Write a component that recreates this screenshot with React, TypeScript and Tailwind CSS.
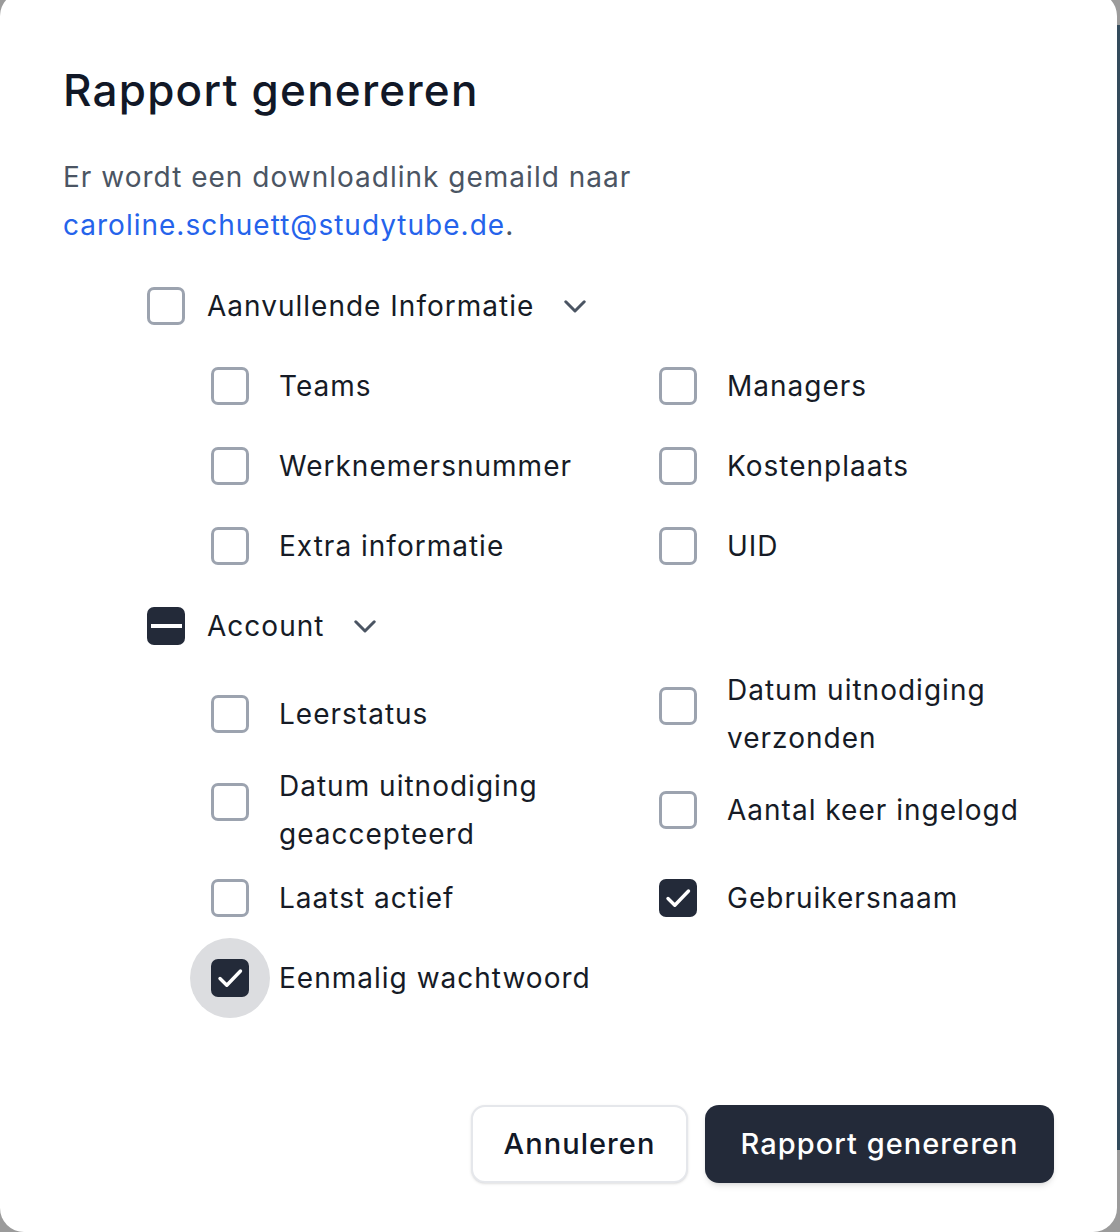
import { useState } from "react";

type Option = {
  id: string;
  label: string;
  checked?: boolean;
  focused?: boolean;
};

const EXTRA_OPTIONS: Option[] = [
  { id: "teams", label: "Teams" },
  { id: "managers", label: "Managers" },
  { id: "employee-number", label: "Werknemersnummer" },
  { id: "cost-center", label: "Kostenplaats" },
  { id: "extra-info", label: "Extra informatie" },
  { id: "uid", label: "UID" },
];

const ACCOUNT_OPTIONS: Option[] = [
  { id: "learning-status", label: "Leerstatus" },
  { id: "invite-sent", label: "Datum uitnodiging verzonden" },
  { id: "invite-accepted", label: "Datum uitnodiging geaccepteerd" },
  { id: "login-count", label: "Aantal keer ingelogd" },
  { id: "last-active", label: "Laatst actief" },
  { id: "username", label: "Gebruikersnaam", checked: true },
  { id: "otp", label: "Eenmalig wachtwoord", checked: true, focused: true },
];

function Box({ state }: { state: "off" | "on" | "mixed" }) {
  if (state === "off") {
    return (
      <span className="block w-[38px] h-[38px] rounded-[7px] border-[3px] border-[#9ca3af] bg-white" />
    );
  }
  return (
    <span className="flex items-center justify-center w-[38px] h-[38px] rounded-[7px] bg-[#232a39]">
      {state === "on" ? (
        <svg width="38" height="38" viewBox="0 0 38 38" fill="none">
          <path
            d="M9 19.5l6.8 6.8L29.5 12"
            stroke="white"
            strokeWidth="3.4"
            strokeLinecap="round"
            strokeLinejoin="round"
          />
        </svg>
      ) : (
        <span className="block w-[31px] h-[4px] bg-white" />
      )}
    </span>
  );
}

function Chevron() {
  return (
    <svg width="22" height="13" viewBox="0 0 22 13" fill="none" className="ml-[30px] shrink-0">
      <path
        d="M1.8 1.8L11 11L20.2 1.8"
        stroke="#4b5563"
        strokeWidth="3"
        strokeLinecap="round"
        strokeLinejoin="round"
      />
    </svg>
  );
}

function OptionItem({ option }: { option: Option }) {
  return (
    <div className="flex">
      <div
        className={`flex items-center justify-center w-20 h-20 shrink-0 self-start rounded-full ${
          option.focused ? "bg-[#dcdde0]" : ""
        }`}
      >
        <Box state={option.checked ? "on" : "off"} />
      </div>
      <span className="self-center ml-[9px] pr-4 text-[28px] leading-[48px] tracking-[0.036em] text-[#161b26]">
        {option.label}
      </span>
    </div>
  );
}

function Group({
  label,
  state,
  options,
}: {
  label: string;
  state: "off" | "mixed";
  options: Option[];
}) {
  return (
    <div>
      <div className="flex items-center h-20">
        <div className="flex items-center justify-center w-20 h-20 shrink-0">
          <Box state={state} />
        </div>
        <span className="ml-px text-[28px] leading-[48px] tracking-[0.036em] text-[#161b26]">
          {label}
        </span>
        <Chevron />
      </div>
      <div className="ml-16 grid grid-cols-[448px_1fr] items-center">
        {options.map((o) => (
          <OptionItem key={o.id} option={o} />
        ))}
      </div>
    </div>
  );
}

export default function App() {
  const [open] = useState(true);

  return (
    <div
      className="flex w-[1120px] h-[1232px] overflow-hidden bg-[#9b9b9b]"
      style={{ fontFamily: "Inter, 'Noto Sans', sans-serif" }}
    >
      {open && (
        <div className="w-[1117px] h-[1240px] mt-[-8px] shrink-0 flex flex-col bg-white rounded-[24px] px-[63px] pt-[70px] pb-[49px]">
          <h1 className="text-[44px] leading-[56px] font-medium text-[#111827] tracking-[0.028em]">
            Rapport genereren
          </h1>
          <p className="mt-[35px] text-[28px] leading-[48px] tracking-[0.036em] text-[#4b5563]">
            Er wordt een downloadlink gemaild naar
            <br />
            <span className="text-[#2563eb]">caroline.schuett@studytube.de</span>.
          </p>

          <div className="ml-[63px] mt-[17px]">
            <Group label="Aanvullende Informatie" state="off" options={EXTRA_OPTIONS} />
            <Group label="Account" state="mixed" options={ACCOUNT_OPTIONS} />
          </div>

          <div className="mt-auto flex justify-end gap-[17px]">
            <button className="w-[217px] h-[78px] rounded-[14px] border-2 border-[#e5e7eb] bg-white shadow-sm text-[29px] font-medium tracking-[0.036em] text-[#111827]">
              Annuleren
            </button>
            <button className="w-[349px] h-[78px] rounded-[14px] bg-[#232a39] shadow-md text-[29px] font-medium tracking-[0.036em] text-white">
              Rapport genereren
            </button>
          </div>
        </div>
      )}
      <div className="w-[3px] shrink-0">
        <div className="mt-[25px] h-[1125px] bg-[#334b5c]" />
      </div>
    </div>
  );
}
